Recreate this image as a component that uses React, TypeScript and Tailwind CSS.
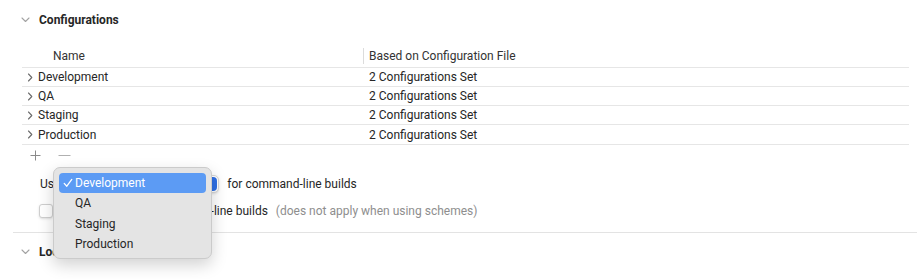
const rows = ['Development', 'QA', 'Staging', 'Production'];
const menuItems = ['Development', 'QA', 'Staging', 'Production'];

function DisclosureDown() {
  return (
    <svg width="9" height="6" viewBox="0 0 9 6" className="shrink-0">
      <path d="M1 1 L4.5 4.5 L8 1" fill="none" stroke="#a3a3a3" strokeWidth="1.1" strokeLinecap="round" strokeLinejoin="round" />
    </svg>
  );
}

function DisclosureRight() {
  return (
    <svg width="6" height="9" viewBox="0 0 6 9" className="shrink-0">
      <path d="M1.5 1 L4.8 4.5 L1.5 8" fill="none" stroke="#6b6b6b" strokeWidth="1.1" strokeLinecap="round" strokeLinejoin="round" />
    </svg>
  );
}

export default function App() {
  return (
    <div className="relative w-[921px] h-[279px] overflow-hidden bg-white text-[12px] text-[#262626] font-['Roboto','Liberation_Sans',sans-serif]">
      {/* Configurations header */}
      <div className="flex items-center h-[20px] mt-[10px] pl-[21px] gap-[9px]">
        <DisclosureDown />
        <span className="font-bold">Configurations</span>
      </div>

      {/* table */}
      <div className="ml-[22px] mr-[12px] mt-[15px]">
        <div className="flex h-[23px] items-center border-b border-[#e6e6e6]">
          <div className="w-[341px] pl-[31px] text-[#333]">Name</div>
          <div className="h-[16px] border-l border-[#dcdcdc] pl-[5px] flex items-center text-[#333]">Based on Configuration File</div>
        </div>
        {rows.map((r, i) => (
          <div key={r} className={i === 3 ? 'flex h-[20px] items-center border-b border-[#e6e6e6]' : 'flex h-[19px] items-center border-b border-[#e6e6e6]'}>
            <div className="w-[341px] flex items-center">
              <span className="w-[16px] flex justify-center">
                <DisclosureRight />
              </span>
              <span>{r}</span>
            </div>
            <div className="pl-[6px]">2 Configurations Set</div>
          </div>
        ))}
      </div>

      {/* add / remove */}
      <div className="flex items-center h-[21px] pl-[30px] gap-[17px]">
        <svg width="11" height="11" viewBox="0 0 11 11">
          <path d="M5.5 0.5 V10.5 M0.5 5.5 H10.5" stroke="#8a8a8a" strokeWidth="1" />
        </svg>
        <svg width="13" height="11" viewBox="0 0 13 11">
          <path d="M0.5 5.5 H12.5" stroke="#b0b0b0" strokeWidth="1" />
        </svg>
      </div>

      {/* use popup row */}
      <div className="flex items-center h-[20px] mt-[8px] pl-[40px]">
        <span>Use</span>
        <div className="ml-[5px] w-[154px] h-[18px] rounded-[5px] bg-white border border-[#d6d6d6] shadow-sm flex items-center justify-between pl-[8px] pr-[1px]">
          <span>Development</span>
          <span className="w-[16px] h-[14px] rounded-[4px] bg-[#2f6fe4]" />
        </div>
        <span className="ml-[8px]">for command-line builds</span>
      </div>

      {/* checkbox row */}
      <div className="flex items-center h-[20px] mt-[7px] pl-[39px]">
        <span className="w-[14px] h-[14px] rounded-[3px] border border-[#cfcfcf] bg-white shadow-sm" />
        <span className="ml-[17px]">Use Release for command-line builds</span>
        <span className="ml-[8px] text-[#8e8e8e]">(does not apply when using schemes)</span>
      </div>

      {/* divider */}
      <div className="ml-[13px] mr-[4px] mt-[11px] border-t border-[#e3e3e3]" />

      {/* next section header */}
      <div className="flex items-center h-[20px] mt-[9px] pl-[21px] gap-[9px]">
        <DisclosureDown />
        <span className="font-bold">Localizations</span>
      </div>

      {/* popup menu */}
      <div className="absolute left-[53px] top-[167px] w-[159px] h-[92px] rounded-[7px] bg-[#e4e4e4] border border-[#cbcbcb] shadow-[0_6px_16px_rgba(0,0,0,0.18)] px-[5px] pt-[5px]">
        {menuItems.map((m, i) => (
          <div
            key={m}
            className={
              i === 0
                ? 'flex items-center h-[20px] rounded-[4px] bg-[#5c9bf4] text-white'
                : i === 2
                  ? 'flex items-center h-[21px] text-[#262626]'
                  : 'flex items-center h-[20px] text-[#262626]'
            }
          >
            <span className="w-[16px] flex justify-end pr-[2px]">
              {i === 0 && (
                <svg width="10" height="10" viewBox="0 0 10 10">
                  <path d="M1.2 5.4 L3.8 8.2 L8.8 1.4" fill="none" stroke="white" strokeWidth="1.3" strokeLinecap="round" strokeLinejoin="round" />
                </svg>
              )}
            </span>
            <span>{m}</span>
          </div>
        ))}
      </div>
    </div>
  );
}
